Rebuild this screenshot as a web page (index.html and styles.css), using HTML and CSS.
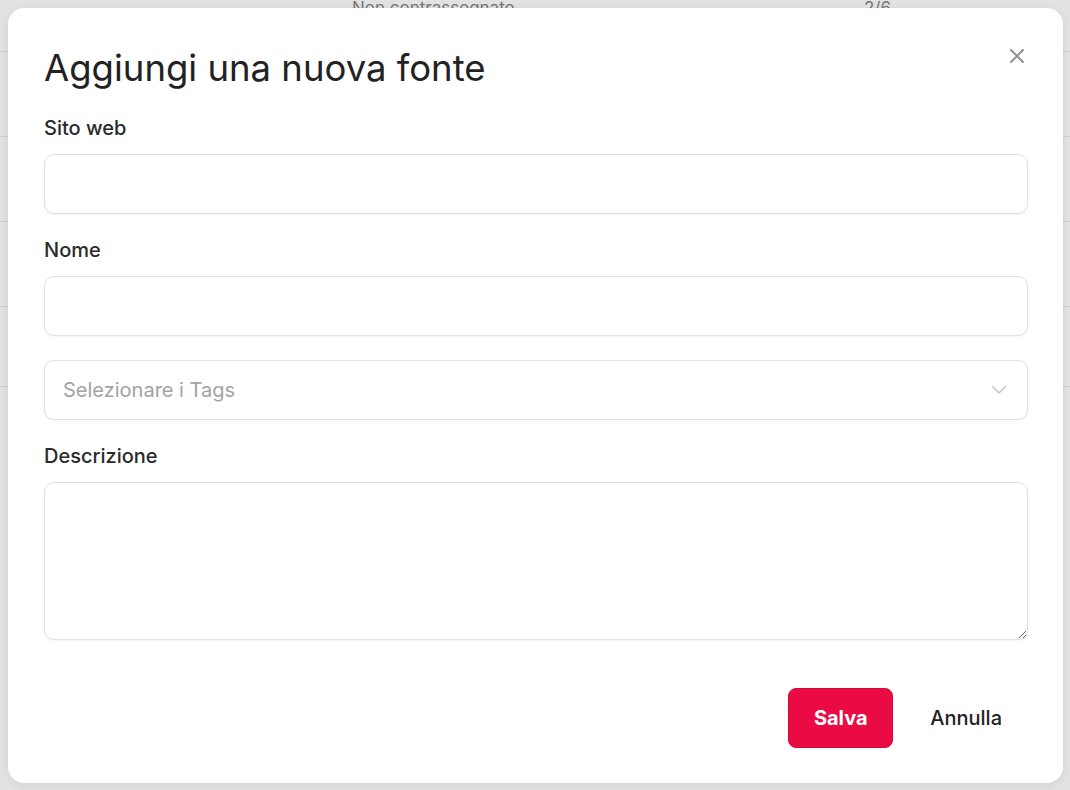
FILE: index.html
```html
<!DOCTYPE html>
<html lang="it">
<head>
  <meta charset="UTF-8" />
  <meta name="viewport" content="width=device-width, initial-scale=1.0"/>
  <title>Aggiungi una nuova fonte</title>
  <link rel="stylesheet" href="styles.css">
</head>
<body>
  <div class="page">
    <div class="riga">
      <span class="col-stato">Non contrassegnato</span>
      <span class="col-num">2/6</span>
    </div>
    <div class="riga"></div>
    <div class="riga"></div>
    <div class="riga"></div>
    <div class="riga riga-corta"></div>
  </div>

  <div class="overlay">
    <form class="modal">
      <button type="button" class="chiudi" aria-label="Chiudi">
        <svg width="16" height="16" viewBox="0 0 16 16" fill="none" stroke="currentColor" stroke-width="1.8" stroke-linecap="round">
          <path d="M2 2L14 14M14 2L2 14"/>
        </svg>
      </button>

      <h2 class="titolo">Aggiungi una nuova fonte</h2>

      <div class="campo primo">
        <label for="sito">Sito web</label>
        <input type="text" id="sito">
      </div>

      <div class="campo">
        <label for="nome">Nome</label>
        <input type="text" id="nome">
      </div>

      <div class="campo">
        <div class="select">
          <span class="placeholder">Selezionare i Tags</span>
          <svg width="16" height="10" viewBox="0 0 16 10" fill="none" stroke="currentColor" stroke-width="1.6" stroke-linecap="round" stroke-linejoin="round">
            <path d="M1.5 1.5L8 8L14.5 1.5"/>
          </svg>
        </div>
      </div>

      <div class="campo">
        <label for="descrizione">Descrizione</label>
        <textarea id="descrizione"></textarea>
      </div>

      <div class="azioni">
        <button type="button" class="btn btn-salva">Salva</button>
        <button type="button" class="btn btn-annulla">Annulla</button>
      </div>
    </form>
  </div>
</body>
</html>
```

FILE: styles.css
```css
body {
  margin: 0;
  font-family: Inter, "Noto Sans", sans-serif;
  background-color: #e2e2e2;
  color: #222;
  overflow: hidden;
}

.page {
  margin-top: -33px;
}

.riga {
  height: 84px;
  border-bottom: 1px solid #d0d0d0;
  display: grid;
  grid-template-columns: 352px 512px 1fr;
  align-items: center;
  font-size: 17px;
  color: #777;
}

.riga-corta {
  height: 79px;
}

.col-stato {
  grid-column: 2;
  margin-top: -2px;
}

.col-num {
  grid-column: 3;
  margin-top: -2px;
}

.overlay {
  position: absolute;
  top: 8px;
  left: 8px;
}

.modal {
  position: relative;
  box-sizing: border-box;
  width: 1055px;
  height: 775px;
  padding: 40px 35px 35px 36px;
  background-color: #fff;
  border-radius: 16px;
  box-shadow: 0 2px 8px rgba(0, 0, 0, 0.08);
}

.chiudi {
  position: absolute;
  top: 40px;
  right: 38px;
  padding: 0;
  border: none;
  background: none;
  color: #8a8a8a;
  cursor: pointer;
}

.titolo {
  margin: 0;
  font-size: 36.5px;
  line-height: 40px;
  font-weight: 400;
  color: #222;
}

.campo {
  display: flex;
  flex-direction: column;
  margin-top: 24px;
}

.campo.primo {
  margin-top: 28px;
}

label {
  font-size: 20px;
  line-height: 24px;
  font-weight: 500;
  margin-bottom: 14px;
  color: #2a2a2a;
}

input[type="text"],
textarea,
.select {
  box-sizing: border-box;
  width: 100%;
  height: 60px;
  padding: 0 18px;
  border: 1px solid #e1e1e1;
  border-radius: 10px;
  background-color: #fff;
  box-shadow: 0 1px 2px rgba(0, 0, 0, 0.05);
  font-family: inherit;
  font-size: 20px;
  color: #222;
  outline: none;
}

textarea {
  height: 158px;
  padding: 14px 18px;
  resize: vertical;
}

.select {
  display: flex;
  align-items: center;
  justify-content: space-between;
  padding-right: 20px;
}

.placeholder {
  color: #a3a3a3;
}

.select svg {
  color: #c6c6c6;
}

.azioni {
  display: flex;
  justify-content: flex-end;
  gap: 12px;
  margin-top: 48px;
}

.btn {
  height: 60px;
  padding: 0 25px;
  border-radius: 8px;
  font-family: inherit;
  font-size: 20px;
  cursor: pointer;
}

.btn-salva {
  width: 105px;
  padding: 0;
  background-color: #ea0b45;
  border: 1px solid #d20a3e;
  color: #fff;
  font-weight: 700;
}

.btn-annulla {
  padding-right: 26px;
  background: none;
  border: none;
  color: #222;
  font-weight: 500;
}
```
